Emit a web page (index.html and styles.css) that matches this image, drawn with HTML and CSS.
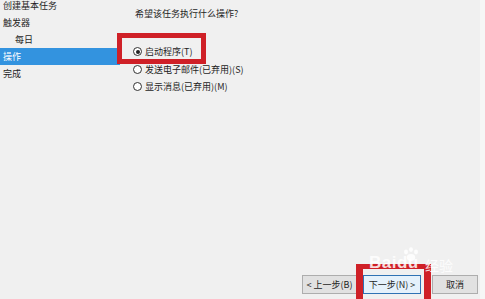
FILE: index.html
```html
<!DOCTYPE html>
<html lang="zh-CN">
<head>
<meta charset="utf-8">
<title>创建基本任务向导</title>
<link rel="stylesheet" href="styles.css">
</head>
<body>
<div class="wizard">
  <div class="body-row">
    <ul class="nav">
      <li class="nav-item">创建基本任务</li>
      <li class="nav-item">触发器</li>
      <li class="nav-item sub">每日</li>
      <li class="nav-item selected">操作</li>
      <li class="nav-item">完成</li>
    </ul>
    <div class="content">
      <div class="question">希望该任务执行什么操作?</div>
      <div class="options">
        <label class="option"><span class="radio checked"></span><span>启动程序(T)</span></label>
        <label class="option"><span class="radio"></span><span>发送电子邮件(已弃用)(S)</span></label>
        <label class="option"><span class="radio"></span><span>显示消息(已弃用)(M)</span></label>
      </div>
    </div>
  </div>
  <div class="footer">
    <button class="btn btn-prev">&lt; 上一步(B)</button>
    <button class="btn btn-next">下一步(N) &gt;</button>
    <button class="btn btn-cancel">取消</button>
  </div>

  <div class="mark mark-top"></div>
  <div class="mark mark-bottom"></div>
  <div class="watermark">
    <span class="wm-latin">Baidu</span>
    <svg class="wm-paw" width="16" height="14" viewBox="0 0 16 14">
      <ellipse cx="3" cy="5" rx="2" ry="2.4" fill="rgba(255,255,255,0.85)"/>
      <ellipse cx="8" cy="2.6" rx="2" ry="2.4" fill="rgba(255,255,255,0.85)"/>
      <ellipse cx="13" cy="5" rx="2" ry="2.4" fill="rgba(255,255,255,0.85)"/>
      <ellipse cx="8" cy="10.5" rx="4.2" ry="3.4" fill="rgba(255,255,255,0.85)"/>
    </svg>
    <span class="wm-cjk">经验</span>
  </div>
</div>
</body>
</html>
```

FILE: styles.css
```css
* { box-sizing: border-box; }
html, body {
  margin: 0;
  padding: 0;
  background: #f0f0f0;
}
body {
  font-family: "Noto Sans CJK SC", "Noto Sans", "Liberation Sans", sans-serif;
  font-size: 9px;
  color: #1e1e1e;
}
.wizard {
  position: relative;
  width: 485px;
  height: 299px;
  display: flex;
  flex-direction: column;
  overflow: hidden;
  background: #f0f0f0;
  border-right: 5px solid #f6f6f6;
}
.body-row {
  flex: 1;
  display: flex;
}
.nav {
  list-style: none;
  margin: -3px 0 0 0;
  padding: 0;
  width: 120px;
}
.nav-item {
  height: 17px;
  line-height: 17px;
  padding-left: 3px;
  white-space: nowrap;
}
.nav-item.sub { padding-left: 15px; }
.nav-item.selected {
  background: #3393df;
  color: #ffffff;
}
.content {
  flex: 1;
  padding-left: 15px;
  padding-top: 8px;
}
.question {
  height: 12px;
  line-height: 12px;
}
.options {
  margin-top: 23px;
  margin-left: -2px;
  display: flex;
  flex-direction: column;
}
.option {
  display: flex;
  align-items: center;
  gap: 3px;
  height: 17.5px;
  white-space: nowrap;
}
.radio {
  width: 9px;
  height: 9px;
  border: 1px solid #333;
  border-radius: 50%;
  background: #fff;
  display: flex;
  align-items: center;
  justify-content: center;
}
.radio.checked::after {
  content: "";
  width: 4px;
  height: 4px;
  border-radius: 50%;
  background: #222;
}
.footer {
  height: 24px;
  display: flex;
  justify-content: flex-end;
  align-items: flex-start;
  padding-right: 2px;
  gap: 6px;
}
.btn {
  font: inherit;
  font-size: 9px;
  color: #1e1e1e;
  height: 19px;
  padding: 0;
  margin: 0;
  background: #e1e1e1;
  border: 1px solid #adadad;
  border-radius: 0;
}
.btn-prev { width: 55px; }
.btn-next {
  width: 58px;
  background: #e5f1fb;
  border: 1px solid #2f72b4;
  box-shadow: inset 0 0 0 1px #e5f1fb;
}
.btn-cancel { width: 46px; margin-left: 5px; }

.mark {
  position: absolute;
  border-style: solid;
  border-color: #cf2027;
}
.mark-top {
  left: 117px;
  top: 33px;
  width: 89px;
  height: 31px;
  border-width: 5px;
}
.mark-bottom {
  left: 356px;
  top: 264px;
  width: 75px;
  height: 45px;
  border-width: 5px 7px;
}
.watermark {
  position: absolute;
  left: 369px;
  top: 246px;
  width: 90px;
  height: 30px;
  color: rgba(255, 255, 255, 0.85);
  pointer-events: none;
}
.wm-latin {
  position: absolute;
  left: 0;
  top: 8px;
  font-family: "Liberation Sans", sans-serif;
  font-weight: bold;
  font-size: 17px;
  line-height: 17px;
  letter-spacing: 0.5px;
}
.wm-paw {
  position: absolute;
  left: 34px;
  top: 1px;
}
.wm-cjk {
  position: absolute;
  left: 56px;
  top: 11px;
  font-size: 14px;
  line-height: 16px;
}
```
